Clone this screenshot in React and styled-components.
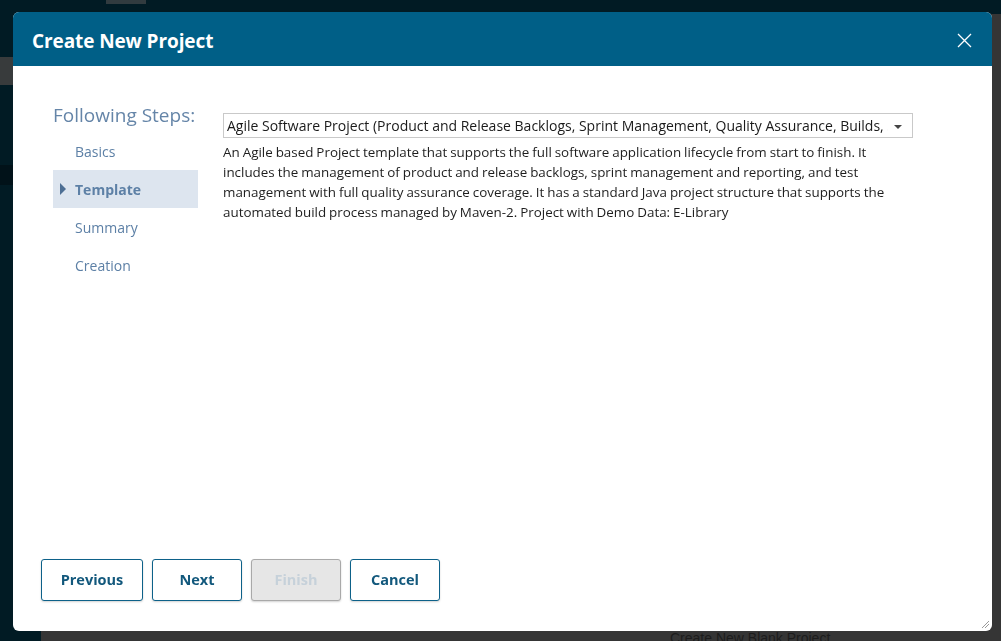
import React from "react";
import styled, { createGlobalStyle } from "styled-components";

const GlobalStyle = createGlobalStyle`
  html, body {
    margin: 0;
    padding: 0;
    height: 100%;
    overflow: hidden;
  }
  body {
    font-family: "Open Sans", "Noto Sans", "Liberation Sans", sans-serif;
    background-color: #011b24;
  }
  #root {
    height: 100%;
  }
`;

/* dimmed application behind the dialog */
const Backdrop = styled.div`
  display: flex;
  flex-direction: column;
  height: 100vh;
  background-color: #011b24;
`;

const TopBar = styled.div`
  height: 14px;
  flex-shrink: 0;
  display: flex;
  padding-left: 106px;
`;

const TopTab = styled.div`
  width: 40px;
  height: 4px;
  background-color: #313b3f;
`;

const AppRow = styled.div`
  flex: 1;
  display: flex;
`;

const SideNav = styled.div`
  width: 41px;
  flex-shrink: 0;
  display: flex;
  flex-direction: column;
  padding-top: 43px;
`;

const SideBand = styled.div`
  height: ${(p) => p.h}px;
  margin-bottom: ${(p) => p.gap}px;
  background-color: ${(p) => p.color};
`;

const AppContent = styled.div`
  flex: 1;
  background-color: #353535;
  display: flex;
  flex-direction: column;
  justify-content: flex-end;
  padding-left: 629px;
`;

const FaintText = styled.div`
  font-family: "Liberation Sans", Arial, sans-serif;
  font-size: 14px;
  color: #1c1c1c;
  line-height: 14px;
  height: 10px;
  overflow: hidden;
`;

/* dialog */
const Dialog = styled.div`
  position: fixed;
  left: 13px;
  top: 12px;
  width: 979px;
  height: 619px;
  background-color: #ffffff;
  border-radius: 6px;
  overflow: hidden;
  display: flex;
  flex-direction: column;
`;

const Header = styled.div`
  height: 54px;
  box-sizing: border-box;
  flex-shrink: 0;
  background-color: #005f87;
  display: flex;
  align-items: center;
  justify-content: space-between;
  padding: 3px 20px 0 19px;
`;

const Title = styled.h1`
  margin: 0;
  font-size: 19px;
  font-weight: 700;
  color: #ffffff;
  letter-spacing: -0.1px;
`;

const CloseButton = styled.button`
  width: 16px;
  height: 16px;
  padding: 0;
  border: none;
  background: none;
  display: flex;
  align-items: center;
  justify-content: center;
  cursor: pointer;
`;

const Body = styled.div`
  flex: 1;
  min-height: 0;
  display: flex;
  gap: 25px;
  padding: 37px 79px 0 40px;
`;

const Steps = styled.div`
  width: 145px;
  flex-shrink: 0;
  display: flex;
  flex-direction: column;
`;

const StepsTitle = styled.div`
  font-size: 19px;
  color: #6585a8;
  line-height: 24px;
  margin-bottom: 5px;
  white-space: nowrap;
`;

const Step = styled.div`
  height: 38px;
  display: flex;
  align-items: center;
  padding-left: 22px;
  position: relative;
  font-size: 14px;
  color: #5d80a6;
  font-weight: ${(p) => (p.active ? 700 : 400)};
  background-color: ${(p) => (p.active ? "#dde5ef" : "transparent")};
`;

const StepArrow = styled.span`
  position: absolute;
  left: 7px;
  top: 13px;
  width: 0;
  height: 0;
  border-top: 6px solid transparent;
  border-bottom: 6px solid transparent;
  border-left: 6px solid #4d6f94;
`;

const Content = styled.div`
  flex: 1;
  min-width: 0;
  display: flex;
  flex-direction: column;
  padding-top: 10px;
`;

const Select = styled.div`
  height: 23px;
  border: 1px solid #c9c9c9;
  display: flex;
  align-items: center;
  padding-left: 3px;
  position: relative;
`;

const SelectText = styled.span`
  flex: 1;
  min-width: 0;
  white-space: nowrap;
  overflow: hidden;
  font-size: 14px;
  color: #1a1a1a;
  margin-right: 24px;
`;

const Caret = styled.span`
  position: absolute;
  right: 10px;
  top: 11px;
  width: 0;
  height: 0;
  border-left: 4px solid transparent;
  border-right: 4px solid transparent;
  border-top: 4px solid #444;
`;

const Description = styled.p`
  margin: 4px 0 0 0;
  font-size: 13.4px;
  word-spacing: -0.5px;
  line-height: 20px;
  color: #1e1e1e;
`;

const Footer = styled.div`
  flex-shrink: 0;
  display: flex;
  gap: 9px;
  padding: 0 28px 30px 28px;
  position: relative;
`;

const Button = styled.button`
  height: 42px;
  width: ${(p) => p.w}px;
  padding: 0 0 2px 0;
  border-radius: 3px;
  border: 1px solid ${(p) => (p.disabled ? "#a9a9a9" : "#0d6189")};
  background-color: ${(p) => (p.disabled ? "#e6e6e6" : "#ffffff")};
  color: ${(p) => (p.disabled ? "#c6d1da" : "#12587c")};
  font-family: "Open Sans", "Noto Sans", sans-serif;
  font-size: 14.5px;
  font-weight: 700;
  box-shadow: 0 1px 2px rgba(0, 0, 0, 0.18);
  cursor: ${(p) => (p.disabled ? "default" : "pointer")};
`;

const Grip = styled.svg`
  position: absolute;
  right: 2px;
  bottom: 2px;
`;

const steps = ["Basics", "Template", "Summary", "Creation"];

const description =
  "An Agile based Project template that supports the full software application lifecycle from start to finish. It includes the management of product and release backlogs, sprint management and reporting, and test management with full quality assurance coverage. It has a standard Java project structure that supports the automated build process managed by Maven-2. Project with Demo Data: E-Library";

export default function App() {
  return (
    <>
      <GlobalStyle />
      <Backdrop>
        <TopBar>
          <TopTab />
        </TopBar>
        <AppRow>
          <SideNav>
            <SideBand h={28} gap={80} color="#383b3c" />
            <SideBand h={20} gap={0} color="#011219" />
          </SideNav>
          <AppContent>
            <FaintText>Create New Blank Project</FaintText>
          </AppContent>
        </AppRow>
      </Backdrop>

      <Dialog>
        <Header>
          <Title>Create New Project</Title>
          <CloseButton aria-label="Close">
            <svg width="15" height="15" viewBox="0 0 15 15">
              <path
                d="M1 1 L14 14 M14 1 L1 14"
                stroke="#ffffff"
                strokeWidth="1.3"
                fill="none"
              />
            </svg>
          </CloseButton>
        </Header>

        <Body>
          <Steps>
            <StepsTitle>Following Steps:</StepsTitle>
            {steps.map((s) => (
              <Step key={s} active={s === "Template"}>
                {s === "Template" && <StepArrow />}
                {s}
              </Step>
            ))}
          </Steps>
          <Content>
            <Select>
              <SelectText>
                Agile Software Project (Product and Release Backlogs, Sprint
                Management, Quality Assurance, Builds, Source Code Integration)
              </SelectText>
              <Caret />
            </Select>
            <Description>{description}</Description>
          </Content>
        </Body>

        <Footer>
          <Button w={102}>Previous</Button>
          <Button w={90}>Next</Button>
          <Button w={90} disabled>
            Finish
          </Button>
          <Button w={90}>Cancel</Button>
          <Grip width="10" height="10" viewBox="0 0 10 10">
            <path d="M9 2 L2 9 M9 5 L5 9" stroke="#9a9a9a" strokeWidth="1" />
          </Grip>
        </Footer>
      </Dialog>
    </>
  );
}
